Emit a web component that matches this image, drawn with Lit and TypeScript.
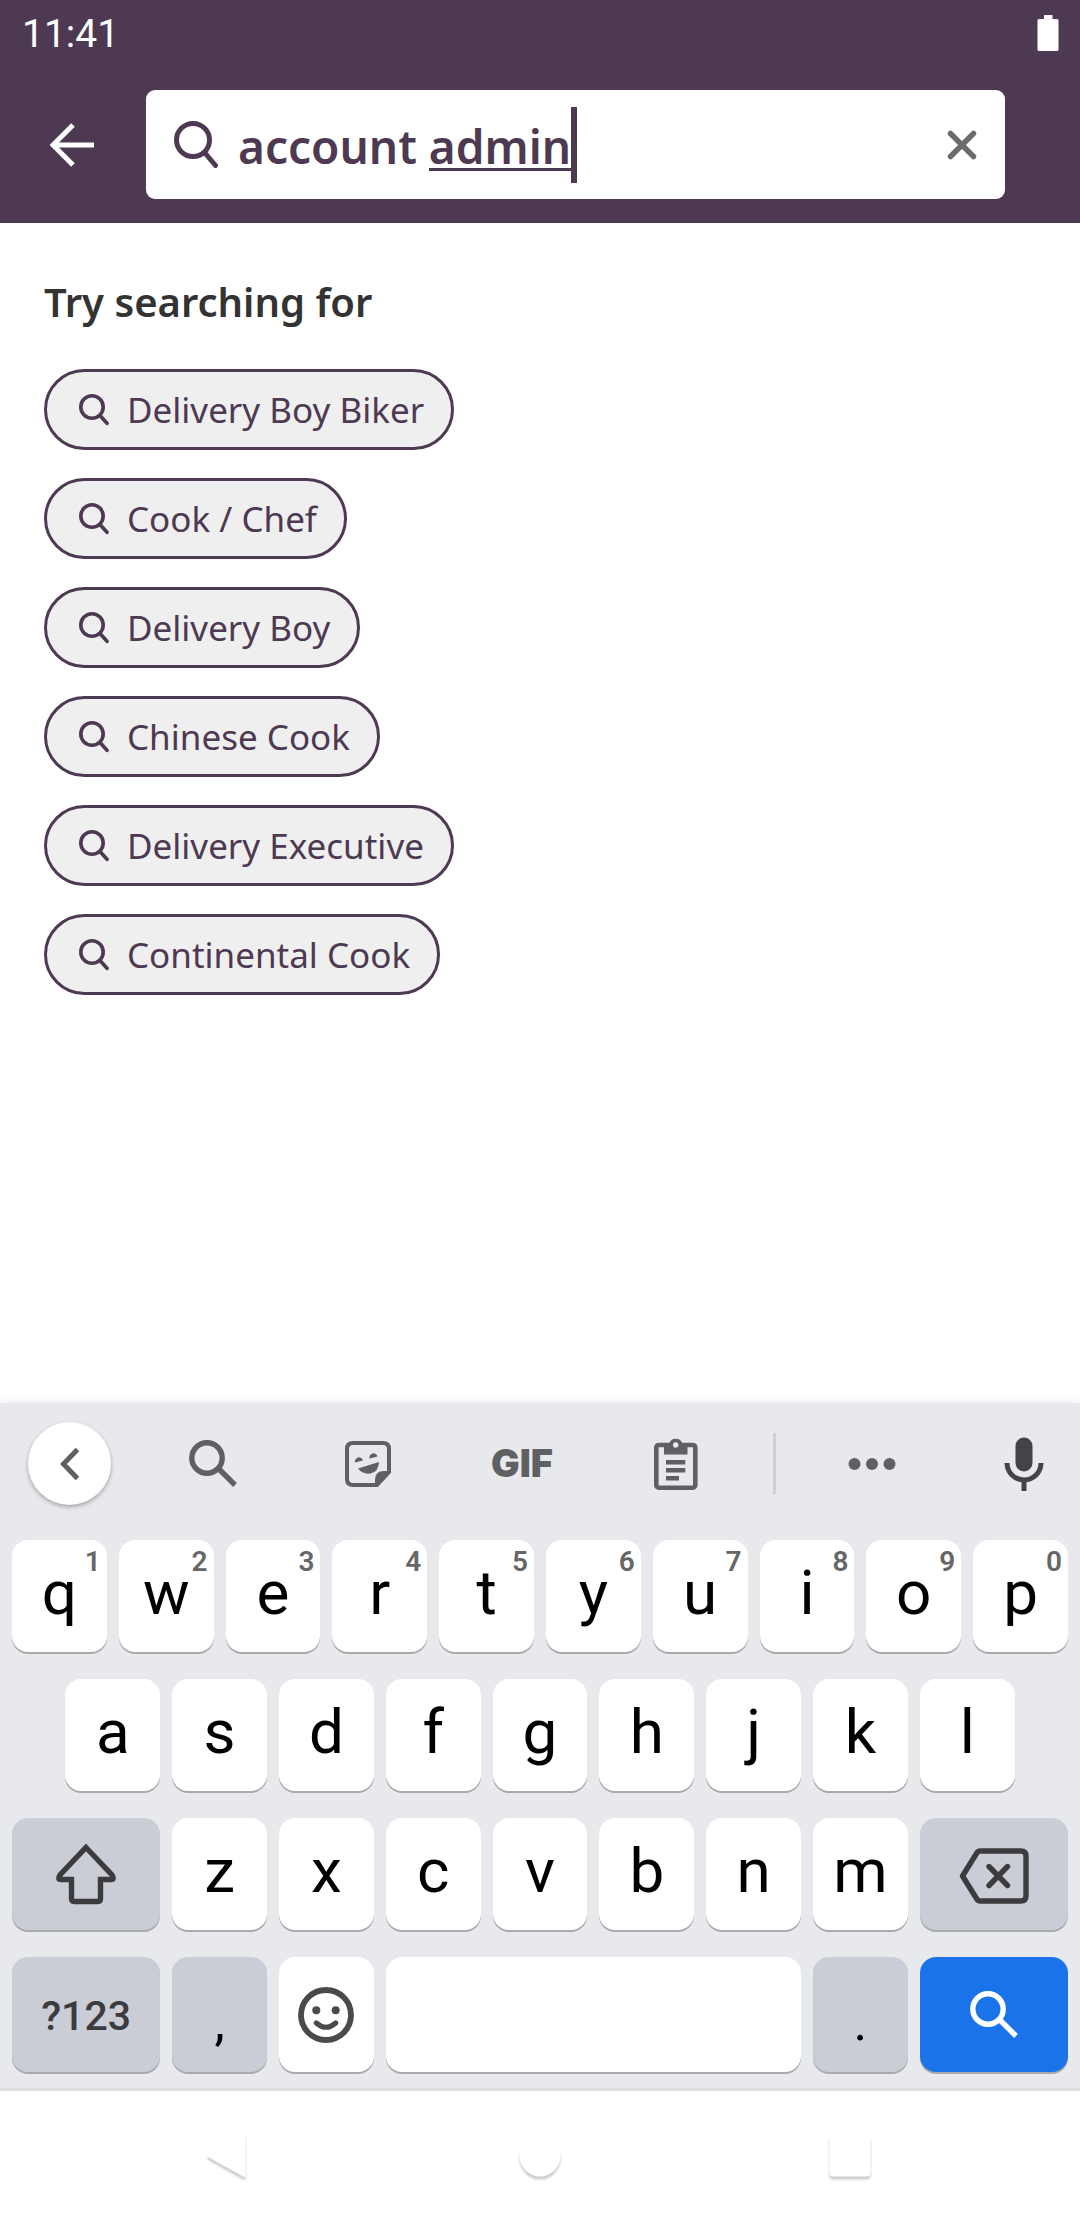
import { LitElement, html, css, svg, nothing } from "lit";
import { customElement, property, state } from "lit/decorators.js";

const glyphs = {
  back: { w: 44, h: 44, art: svg`<path d="M44 22H5M23 2L3 22L23 42" fill="none" stroke="currentColor" stroke-width="5"/>` },
  find: { w: 44, h: 47, art: svg`<circle cx="19" cy="19" r="16.5" fill="none" stroke="currentColor" stroke-width="5"/><path d="M31 32L41.5 44.5" stroke="currentColor" stroke-width="5" stroke-linecap="round"/>` },
  clear: { w: 30, h: 30, art: svg`<path d="M3.5 3.5L26.5 26.5M26.5 3.5L3.5 26.5" stroke="currentColor" stroke-width="5.5" stroke-linecap="round"/>` },
  chip: { w: 30, h: 32, art: svg`<circle cx="13" cy="13" r="11.2" fill="none" stroke="currentColor" stroke-width="3.6"/><path d="M21 21.5L28 29.3" stroke="currentColor" stroke-width="3.6" stroke-linecap="round"/>` },
  chevron: { w: 20, h: 34, art: svg`<path d="M17.5 2.5L3.5 17L17.5 31.5" fill="none" stroke="currentColor" stroke-width="5"/>` },
  search: { w: 48, h: 48, art: svg`<circle cx="18" cy="18" r="15.2" fill="none" stroke="currentColor" stroke-width="5.4"/><path d="M29.5 30.5L31.5 30.5L46 45" fill="none" stroke="currentColor" stroke-width="5.4"/>` },
  sticker: { w: 46, h: 46, art: svg`<path d="M8 2H38Q44 2 44 8V31L32 44H8Q2 44 2 38V8Q2 2 8 2Z" fill="none" stroke="currentColor" stroke-width="4"/><path d="M30 45V39Q30 30 39 30H45V32L32 45Z" fill="currentColor"/><path d="M10 21.5A4 4 0 1 1 18 19.5ZM24.5 17.5A4 4 0 1 1 32.5 15.5ZM13 27.5L34 21Q33.5 31 25.5 32.5Q17.5 33.5 13 27.5Z" fill="currentColor"/>` },
  clipboard: { w: 44, h: 52, art: svg`<rect x="2.3" y="7" width="39" height="42.7" rx="2.5" fill="none" stroke="currentColor" stroke-width="4.6"/><path d="M10 16.5V6H15A7 7 0 0 1 28.5 6H33.5V16.5Z" fill="currentColor"/><circle class="hole" cx="21.7" cy="7" r="2.7"/><path d="M12 24.3H31.3M12 32.3H31.3M12 40.2H25" stroke="currentColor" stroke-width="4.6"/>` },
  more: { w: 48, h: 14, art: svg`<circle cx="6.5" cy="7" r="6" fill="currentColor"/><circle cx="24" cy="7" r="6" fill="currentColor"/><circle cx="41.5" cy="7" r="6" fill="currentColor"/>` },
  mic: { w: 40, h: 54, art: svg`<rect x="11.5" y="0.5" width="17" height="34" rx="8.5" fill="currentColor"/><path d="M3 26A17 17 0 0 0 37 26M20 43V54" fill="none" stroke="currentColor" stroke-width="5"/>` },
  shift: { w: 62, h: 62, art: svg`<path d="M31 4.5L57 32Q60 36.5 56 36.5H45.5V55Q45.5 58.5 43 58.5H19Q16.5 58.5 16.5 55V36.5H6Q2 36.5 5 32Z" fill="none" stroke="currentColor" stroke-width="5.4"/>` },
  erase: { w: 70, h: 56, art: svg`<path d="M21 3H62Q67 3 67 8V48Q67 53 62 53H21Q19 53 17.5 50.5L3.5 28L17.5 5.5Q19 3 21 3Z" fill="none" stroke="currentColor" stroke-width="5.4" stroke-linejoin="round"/><path d="M30 18.5L48.5 37.5M48.5 18.5L30 37.5" stroke="currentColor" stroke-width="5.4" stroke-linecap="round"/>` },
  smile: { w: 56, h: 56, art: svg`<circle cx="28" cy="28" r="25" fill="none" stroke="currentColor" stroke-width="5.8"/><circle cx="18.3" cy="23.3" r="4" fill="currentColor"/><circle cx="37.7" cy="23.3" r="4" fill="currentColor"/><path d="M18.3 36Q28 44.5 37.7 36" fill="none" stroke="currentColor" stroke-width="5" stroke-linecap="round"/>` },
  battery: { w: 22, h: 36, art: svg`<path d="M7 0H15.5V4H20Q21.5 4 21.5 5.5V34.5Q21.5 36 20 36H2Q0.5 36 0.5 34.5V5.5Q0.5 4 2 4H7Z" fill="currentColor"/>` },
  navBack: { w: 48, h: 46, art: svg`<path d="M39.5 2.5V42.5Q39.5 45 37 43.5L2 24Q0 22.5 2 21L37 1Q39.5 0 39.5 2.5Z" fill="#fff"/>` },
  navHome: { w: 42, h: 42, art: svg`<circle cx="21" cy="21" r="20.5" fill="#fff"/>` },
  navRecent: { w: 42, h: 42, art: svg`<rect x="0.5" y="0.5" width="41" height="41" rx="4" fill="#fff"/>` },
};
type GlyphName = keyof typeof glyphs;

const glyph = (name: GlyphName) => {
  const g = glyphs[name];
  return html`<svg class="glyph" width=${g.w} height=${g.h} viewBox="0 0 ${g.w} ${g.h}" aria-hidden="true">${g.art}</svg>`;
};

const base = css`
  *, *::before, *::after { box-sizing: border-box; }
  button { margin: 0; padding: 0; border: 0; background: none; color: inherit; font: inherit; cursor: pointer; }
  .glyph { display: block; flex: none; }
`;

@customElement("search-field")
class SearchField extends LitElement {
  @property() value = "";
  @state() private start = 0;
  @state() private end = 0;

  static styles = [base, css`
    :host { display: flex; flex: 1; min-width: 0; align-items: center; height: 109px; padding: 0 28px; border-radius: 9px; background: #fff; color: #4d3951; }
    .box { position: relative; flex: 1; min-width: 0; margin: 0 20px; }
    .input { display: block; width: 100%; height: 76px; padding: 2px 0 0; border: 0; outline: 0; background: none; color: inherit; caret-color: transparent;
      font: 600 46px/74px "Noto Sans", "Open Sans", sans-serif; }
    .composing { position: absolute; top: 61px; height: 3px; background: #4d3951; }
    .caret { position: absolute; top: 0; width: 6px; height: 76px; background: #4d3951; }
    .clear { display: grid; place-items: center; color: #6b6b6b; }
  `];

  /* The word being composed is underlined, and the caret follows it. */
  updated(changed: Map<string, unknown>) {
    if (!changed.has("value")) return;
    const input = this.renderRoot.querySelector("input")!;
    const pen = document.createElement("canvas").getContext("2d")!;
    const style = getComputedStyle(input);
    pen.font = `${style.fontWeight} ${style.fontSize} ${style.fontFamily}`;
    this.start = Math.round(pen.measureText(this.value.slice(0, this.value.lastIndexOf(" ") + 1)).width);
    this.end = Math.round(pen.measureText(this.value).width);
  }

  render() {
    return html`
      ${glyph("find")}
      <div class="box">
        <input class="input" type="text" aria-label="Search jobs" .value=${this.value}
          @input=${(e: Event) => (this.value = (e.target as HTMLInputElement).value)}>
        <span class="composing" style="left:${this.start}px;width:${this.end - this.start}px"></span>
        <span class="caret" style="left:${this.end}px"></span>
      </div>
      <button class="clear" aria-label="Clear" @click=${() => (this.value = "")}>${glyph("clear")}</button>
    `;
  }
}

type Key = { label?: string; name?: string; hint?: string; icon?: GlyphName; kind?: string };
const letters = (s: string): Key[] => [...s].map((label) => ({ label }));
const rows: Key[][] = [
  letters("qwertyuiop").map((k, i) => ({ ...k, hint: String((i + 1) % 10) })),
  letters("asdfghjkl"),
  [{ icon: "shift", name: "Shift", kind: "wide grey" }, ...letters("zxcvbnm"), { icon: "erase", name: "Backspace", kind: "wide grey low" }],
  [
    { label: "?123", kind: "wide grey mode low" },
    { label: ",", kind: "grey mark" },
    { icon: "smile", name: "Emoji", kind: "emoji" },
    { name: "Space", kind: "space" },
    { label: ".", kind: "grey mark" },
    { icon: "search", name: "Search", kind: "wide go" },
  ],
];

@customElement("soft-keyboard")
class SoftKeyboard extends LitElement {
  static styles = [base, css`
    :host { display: block; background: #e8e9ed; border-bottom: 3px solid #dfe0e0; box-shadow: 0 -2px 8px rgba(0, 0, 0, 0.08); font-family: Roboto, sans-serif; }
    .tools { display: flex; align-items: center; height: 121px; padding-left: 28px; color: #5f6062; }
    .tool { display: grid; place-items: center; flex: 154; height: 83px; }
    .collapse { flex: 0 0 83px; margin-right: 25px; border-radius: 50%; background: #fff; box-shadow: 0 2px 4px rgba(0, 0, 0, 0.3); }
    .gif { font: 900 38px/83px Inter, Roboto, sans-serif; }
    .hole { fill: #e8e9ed; }
    .rule { width: 3px; height: 61px; margin-left: 19px; background: #cfd0d4; }
    .more { flex: 192; }
    .mic { flex: 0 0 112px; color: #434446; }
    .keys { display: flex; flex-direction: column; gap: 27px; padding: 16px 12px; }
    .row { display: flex; justify-content: center; gap: 12px; }
    .key { position: relative; display: flex; align-items: center; justify-content: center; flex: 0 0 calc((100% - 108px) / 10); min-width: 0; height: 112px; padding-bottom: 6px;
      border-radius: 16px; background: #fff; box-shadow: 0 2px 0 #a9aaac; color: #000; font-size: 62px; line-height: 1; }
    .row:last-child .key { height: 115px; }
    .wide { flex: 1; }
    .space { flex-basis: calc((100% - 108px) * 0.4 + 36px); }
    .grey { background: #cbcdd6; color: #3c3c3e; }
    .wide, .emoji { padding: 0; }
    .low { padding-top: 4px; }
    .emoji { color: #4a4a4a; }
    .mode { font-size: 41px; font-weight: 500; }
    .mark { padding: 16px 0 0; color: #000; font-size: 52px; }
    .go { background: #1b73e9; color: #fff; }
    .hint { position: absolute; top: 8px; right: 6px; color: #666; font-size: 28px; line-height: 28px; font-weight: 600; }
  `];

  render() {
    return html`
      <div class="tools">
        <button class="tool collapse" aria-label="Close toolbar">${glyph("chevron")}</button>
        <button class="tool" aria-label="Search">${glyph("search")}</button>
        <button class="tool" aria-label="Stickers">${glyph("sticker")}</button>
        <button class="tool gif">GIF</button>
        <button class="tool" aria-label="Clipboard">${glyph("clipboard")}</button>
        <span class="rule"></span>
        <button class="tool more" aria-label="More">${glyph("more")}</button>
        <button class="tool mic" aria-label="Voice input">${glyph("mic")}</button>
      </div>
      <div class="keys">
        ${rows.map((row) => html`<div class="row">${row.map((k) => html`
          <button class="key ${k.kind ?? ""}" aria-label=${k.name ?? nothing}>${k.icon ? glyph(k.icon) : k.label}${k.hint ? html`<span class="hint">${k.hint}</span>` : nothing}</button>`)}</div>`)}
      </div>
    `;
  }
}

@customElement("app-root")
class AppRoot extends LitElement {
  private suggestions = ["Delivery Boy Biker", "Cook / Chef", "Delivery Boy", "Chinese Cook", "Delivery Executive", "Continental Cook"];

  static styles = [base, css`
    :host { display: flex; flex-direction: column; min-height: 100vh; background: #fff; font-family: "Noto Sans", "Open Sans", sans-serif; }
    .header { background: #4d3951; color: #fff; }
    .status { display: flex; align-items: center; justify-content: space-between; height: 66px; padding: 0 21px 0 22px; font: 400 39px/66px Roboto, sans-serif; }
    .time { padding-top: 2px; }
    .bar { display: flex; align-items: center; padding: 24px 75px 24px 50px; gap: 52px; }
    .main { flex: 1; padding: 40px 44px; }
    .title { margin: 0 0 28px; color: #333; font-size: 40px; line-height: 78px; font-weight: 600; }
    .list { display: flex; flex-direction: column; align-items: flex-start; gap: 28px; margin: 0; padding: 0; list-style: none; }
    .chip { display: flex; align-items: center; gap: 18px; height: 81px; padding: 0 27px 0 32px; border: 3px solid #4d3951; border-radius: 41px; background: #efefef; color: #4d3951; font-size: 35px; line-height: 48px; }
    .nav { display: grid; grid-template-columns: repeat(3, 1fr); height: 129px; padding: 0 75px; background: #fff; }
    .go { display: grid; place-items: center; filter: drop-shadow(0 3px 1px rgba(0, 0, 0, 0.2)); }
  `];

  render() {
    return html`
      <header class="header">
        <div class="status"><span class="time">11:41</span>${glyph("battery")}</div>
        <div class="bar">
          <button aria-label="Back">${glyph("back")}</button>
          <search-field value="account admin"></search-field>
        </div>
      </header>
      <main class="main">
        <h1 class="title">Try searching for</h1>
        <ul class="list">
          ${this.suggestions.map((s) => html`<li><button class="chip">${glyph("chip")}<span>${s}</span></button></li>`)}
        </ul>
      </main>
      <soft-keyboard></soft-keyboard>
      <nav class="nav" aria-label="System">
        <button class="go" aria-label="Back">${glyph("navBack")}</button>
        <button class="go" aria-label="Home">${glyph("navHome")}</button>
        <button class="go" aria-label="Recent apps">${glyph("navRecent")}</button>
      </nav>
    `;
  }
}
